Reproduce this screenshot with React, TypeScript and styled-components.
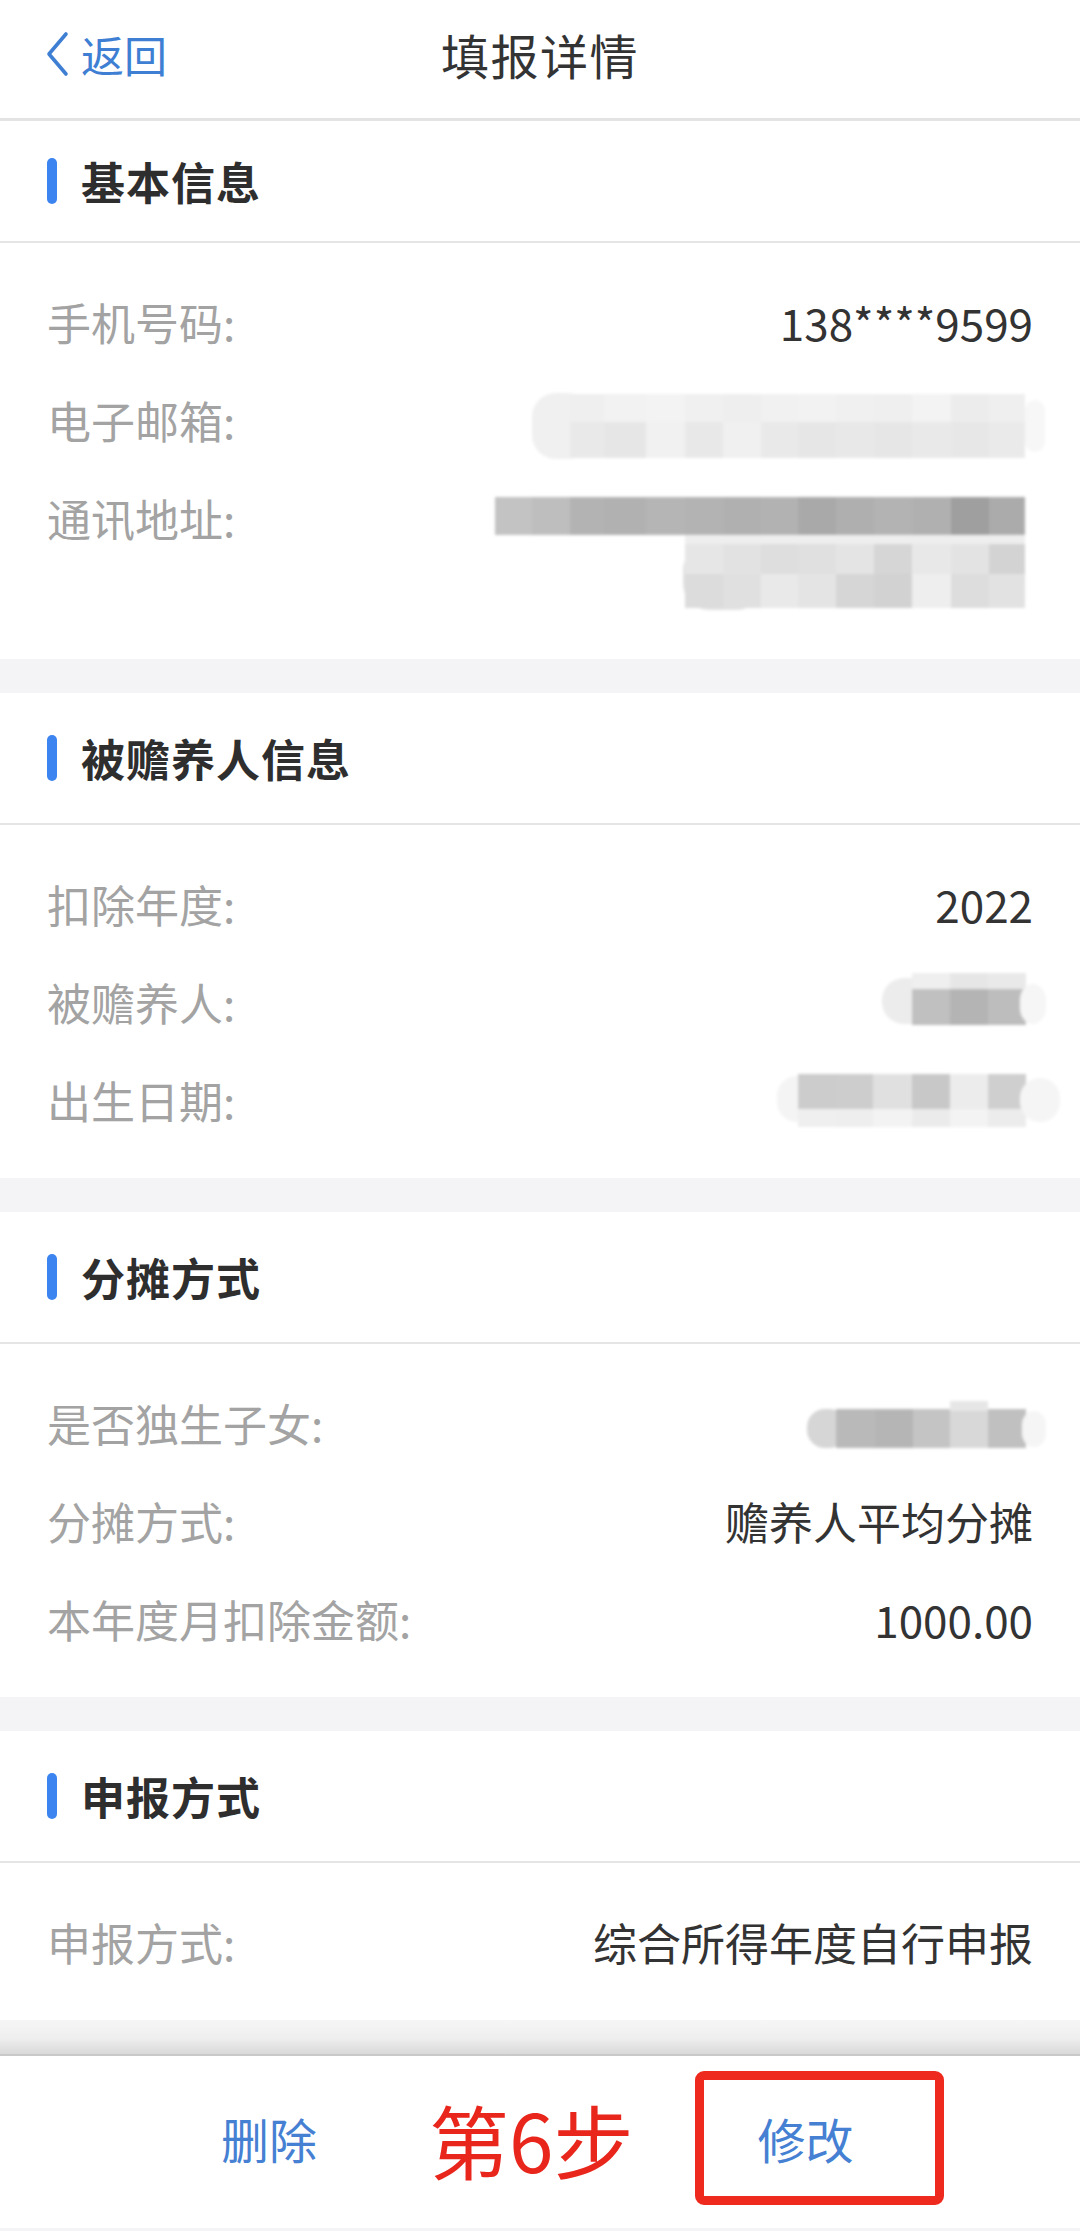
import React from "react";
import styled, { createGlobalStyle } from "styled-components";

const GlobalStyle = createGlobalStyle`
  html, body {
    margin: 0;
    padding: 0;
    background: #f4f4f6;
  }
  * {
    box-sizing: border-box;
  }
`;

const FONT = `"Noto Sans CJK SC", "Noto Sans", sans-serif`;

const Page = styled.div`
  width: 1080px;
  min-height: 2231px;
  display: flex;
  flex-direction: column;
  background: #f4f4f6;
  font-family: ${FONT};
`;

const NavBar = styled.div`
  height: 121px;
  background: #fff;
  border-bottom: 3px solid #e3e3e3;
  display: grid;
  grid-template-columns: 1fr auto 1fr;
  align-items: center;
  padding: 0 45px 10px 45px;
`;

const BackButton = styled.div`
  display: flex;
  align-items: center;
  gap: 12px;
  color: #3f7fd3;
  font-size: 43px;
  line-height: 1;
`;

const NavTitle = styled.div`
  font-size: 48px;
  color: #333;
  letter-spacing: 1.5px;
`;

const Content = styled.div`
  display: flex;
  flex-direction: column;
  gap: 34px;
`;

const Section = styled.section`
  background: #fff;
`;

const SectionHeader = styled.div<{ $compact?: boolean }>`
  height: ${(p) => (p.$compact ? 122 : 132)}px;
  border-bottom: 2px solid #e5e5e5;
  display: flex;
  align-items: center;
  gap: 24px;
  padding-left: 47px;
`;

const HeaderBar = styled.span`
  width: 10px;
  height: 46px;
  border-radius: 5px;
  background: #3c84ef;
`;

const HeaderTitle = styled.h2`
  margin: 0;
  font-size: 44px;
  font-weight: 700;
  color: #2e2e2e;
  letter-spacing: 1px;
`;

const SectionBody = styled.div`
  padding: 30px 47px 29px 47px;
`;

const Row = styled.div`
  display: flex;
  justify-content: space-between;
  align-items: flex-start;
  padding: 21px 0;
`;

const Label = styled.span`
  font-size: 44px;
  line-height: 56px;
  color: #a3a3a3;
`;

const Value = styled.span`
  font-size: 44px;
  line-height: 56px;
  color: #333;
  text-align: right;
`;

const MosaicSvg = styled.svg`
  display: block;
  overflow: visible;
  margin-right: -14px;
`;

const BottomShade = styled.div`
  height: 36px;
  background: linear-gradient(#f6f6f7 0%, #eeeeef 55%, #d9d9da 100%);
  border-bottom: 2px solid #c9c9c9;
`;

const BottomBar = styled.div`
  height: 172px;
  background: #fff;
  display: flex;
  align-items: center;
  padding: 0 0 8px 221px;
`;

const ActionButton = styled.span`
  font-size: 48px;
  color: #4580d3;
  line-height: 1;
`;

const StepNote = styled.span`
  margin-left: 112px;
  font-size: 80px;
  font-weight: 400;
  color: #e8261c;
  line-height: 1;
`;

const Highlight = styled.div`
  margin-left: 62px;
  width: 249px;
  height: 134px;
  border: 9px solid #ee2a1e;
  border-radius: 9px;
  display: flex;
  align-items: center;
  padding-left: 53px;
`;

type Cell = { x: number; w: number; y: number; h: number; c: string; r?: number };

const ROW_EDGE = 1047;

function cellsFrom(xs: number[], y: number, h: number, colors: string[]): Cell[] {
  return colors.map((c, i) => ({ x: xs[i], w: xs[i + 1] - xs[i], y, h, c }));
}

const Mosaic = ({ x0, top = -28, height = 56, cells }: { x0: number; top?: number; height?: number; cells: Cell[] }) => (
  <MosaicSvg
    width={ROW_EDGE - x0}
    height={height}
    viewBox={`${x0} ${top} ${ROW_EDGE - x0} ${height}`}
  >
    <defs>
      <filter id={`soft${x0}${top}`} x="-5%" y="-20%" width="110%" height="140%">
        <feGaussianBlur stdDeviation="1.4" />
      </filter>
    </defs>
    <g filter={`url(#soft${x0}${top})`}>
      {cells.map((k, i) => (
        <rect key={i} x={k.x} y={k.y} width={k.w} height={k.h} fill={k.c} rx={k.r ?? 0} />
      ))}
    </g>
  </MosaicSvg>
);

const ADDR_X = [495, 532, 570, 604, 646, 685, 723, 761, 798, 836, 874, 912, 951, 989, 1025];
const LINE2_X = [685, 723, 761, 798, 836, 874, 912, 951, 989, 1025];
const EMAIL_X = [570, 604, 646, 685, 723, 761, 798, 836, 874, 912, 951, 989, 1025];
const SIX_X = [798, 837, 873, 912, 950, 988, 1026];

const emailCells: Cell[] = [
  { x: 532, w: 60, y: -27, h: 66, c: "#f0f0f0", r: 24 },
  ...cellsFrom(EMAIL_X, -26, 28, ["#efefef", "#f2f2f2", "#f3f3f3", "#f0f0f0", "#eeeeee", "#f1f1f1", "#f2f2f2", "#f0f0f0", "#efefef", "#f3f3f3", "#ececec", "#efefef"]),
  ...cellsFrom(EMAIL_X, 2, 36, ["#e9e9e9", "#e6e6e6", "#f1f1f1", "#e8e8e8", "#f0f0f0", "#e9e9e9", "#e6e6e6", "#e8e8e8", "#e6e6e6", "#e9e9e9", "#e7e7e7", "#eaeaea"]),
  { x: 1025, w: 20, y: -20, h: 52, c: "#f7f7f7", r: 10 },
];

const addressCells: Cell[] = [
  ...cellsFrom(ADDR_X, -21, 38, ["#c3c3c3", "#bebebe", "#b3b3b3", "#b1b1b1", "#b5b5b5", "#b3b3b3", "#b0b0b0", "#b2b2b2", "#a9a9a9", "#afafaf", "#b3b3b3", "#b0b0b0", "#9f9f9f", "#ababab"]),
  { x: 685, w: 340, y: 17, h: 10, c: "#eeeeee" },
  { x: 683, w: 80, y: 26, h: 66, c: "#e2e2e2", r: 26 },
  ...cellsFrom(LINE2_X, 26, 30, ["#e6e6e6", "#e2e2e2", "#dedede", "#e0e0e0", "#e4e4e4", "#d6d6d6", "#e8e8e8", "#e3e3e3", "#d3d3d3"]),
  ...cellsFrom(LINE2_X, 56, 34, ["#dcdcdc", "#e0e0e0", "#e9e9e9", "#e4e4e4", "#d6d6d6", "#d2d2d2", "#eeeeee", "#dddddd", "#e2e2e2"]),
  { x: 1010, w: 15, y: 60, h: 30, c: "#e2e2e2", r: 8 },
];

const dependantCells: Cell[] = [
  { x: 882, w: 60, y: -24, h: 46, c: "#ececec", r: 22 },
  ...cellsFrom([912, 950, 988, 1026], -29, 16, ["#efefef", "#e6e6e6", "#e9e9e9"]),
  ...cellsFrom([912, 950, 988, 1026], -13, 36, ["#c0c0c0", "#b4b4b4", "#bdbdbd"]),
  { x: 1020, w: 26, y: -18, h: 40, c: "#f6f6f6", r: 16 },
];

const birthCells: Cell[] = [
  { x: 777, w: 40, y: -24, h: 46, c: "#f4f4f4", r: 20 },
  ...cellsFrom(SIX_X, -26, 35, ["#cccccc", "#cdcdcd", "#e0e0e0", "#c8c8c8", "#ececec", "#cfcfcf"]),
  ...cellsFrom(SIX_X, 9, 18, ["#efefef", "#eeeeee", "#f3f3f3", "#ebebeb", "#f3f3f3", "#ececec"]),
  { x: 1020, w: 40, y: -22, h: 44, c: "#f5f5f5", r: 20 },
];

const onlyChildCells: Cell[] = [
  { x: 807, w: 40, y: -14, h: 39, c: "#d6d6d6", r: 18 },
  ...cellsFrom([836, 875, 913, 950, 988, 1026], -14, 39, ["#b9b9b9", "#b5b5b5", "#c4c4c4", "#d8d8d8", "#c0c0c0"]),
  { x: 950, w: 38, y: -22, h: 10, c: "#e6e6e6" },
  { x: 1022, w: 24, y: -12, h: 36, c: "#f5f5f5", r: 14 },
];

const ChevronLeft = () => (
  <svg width="24" height="46" viewBox="0 0 24 46">
    <path d="M21 3 L4 23 L21 43" fill="none" stroke="#3f7fd3" strokeWidth="3.6" strokeLinecap="round" strokeLinejoin="round" />
  </svg>
);

const SectionTitle = ({ title, compact }: { title: string; compact?: boolean }) => (
  <SectionHeader $compact={compact}>
    <HeaderBar />
    <HeaderTitle>{title}</HeaderTitle>
  </SectionHeader>
);

export default function App() {
  return (
    <>
      <GlobalStyle />
      <Page>
        <NavBar>
          <BackButton>
            <ChevronLeft />
            <span>返回</span>
          </BackButton>
          <NavTitle>填报详情</NavTitle>
          <span />
        </NavBar>

        <Content>
          <Section>
            <SectionTitle title="基本信息" compact />
            <SectionBody>
              <Row>
                <Label>手机号码:</Label>
                <Value>138****9599</Value>
              </Row>
              <Row>
                <Label>电子邮箱:</Label>
                <Mosaic x0={532} cells={emailCells} />
              </Row>
              <Row>
                <Label>通讯地址:</Label>
                <Mosaic x0={495} height={119} cells={addressCells} />
              </Row>
            </SectionBody>
          </Section>

          <Section>
            <SectionTitle title="被赡养人信息" />
            <SectionBody>
              <Row>
                <Label>扣除年度:</Label>
                <Value>2022</Value>
              </Row>
              <Row>
                <Label>被赡养人:</Label>
                <Mosaic x0={882} cells={dependantCells} />
              </Row>
              <Row>
                <Label>出生日期:</Label>
                <Mosaic x0={777} cells={birthCells} />
              </Row>
            </SectionBody>
          </Section>

          <Section>
            <SectionTitle title="分摊方式" />
            <SectionBody>
              <Row>
                <Label>是否独生子女:</Label>
                <Mosaic x0={807} cells={onlyChildCells} />
              </Row>
              <Row>
                <Label>分摊方式:</Label>
                <Value>赡养人平均分摊</Value>
              </Row>
              <Row>
                <Label>本年度月扣除金额:</Label>
                <Value>1000.00</Value>
              </Row>
            </SectionBody>
          </Section>

          <Section>
            <SectionTitle title="申报方式" />
            <SectionBody>
              <Row>
                <Label>申报方式:</Label>
                <Value>综合所得年度自行申报</Value>
              </Row>
            </SectionBody>
          </Section>
        </Content>

        <BottomShade />
        <BottomBar>
          <ActionButton>删除</ActionButton>
          <StepNote>第6步</StepNote>
          <Highlight>
            <ActionButton>修改</ActionButton>
          </Highlight>
        </BottomBar>
      </Page>
    </>
  );
}
